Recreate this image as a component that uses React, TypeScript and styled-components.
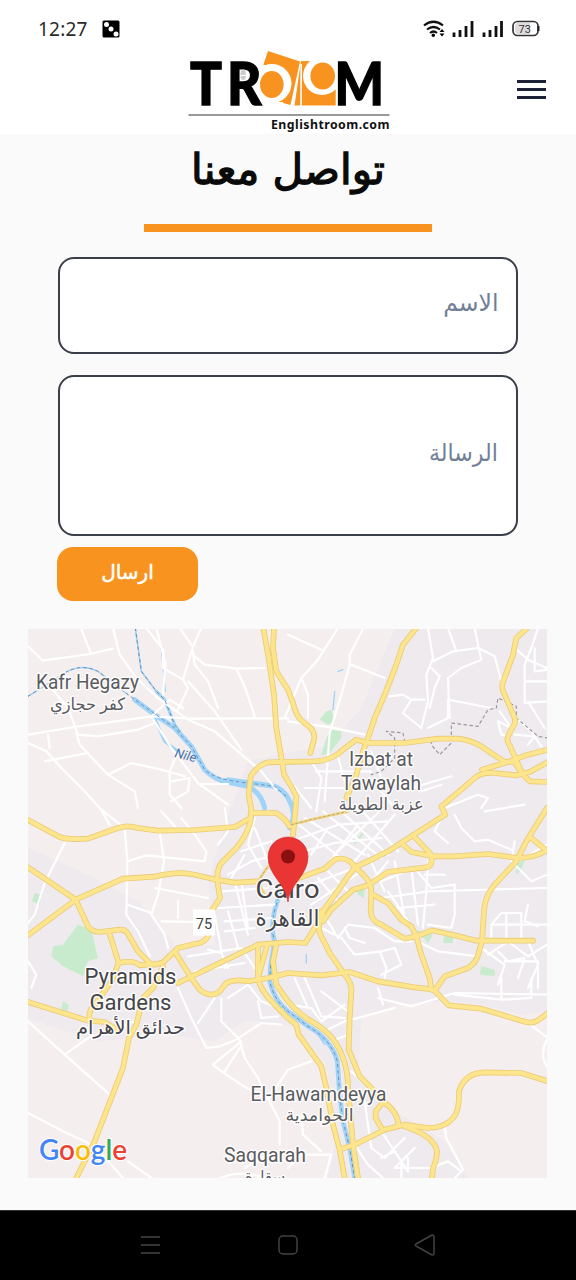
import React from "react";
import styled, { createGlobalStyle } from "styled-components";

const GlobalStyle = createGlobalStyle`
  * { box-sizing: border-box; }
  body { margin: 0; background: #fafafa; font-family: "Noto Sans", "DejaVu Sans", sans-serif; }
`;

const Screen = styled.div`
  display: flex;
  flex-direction: column;
  width: 576px;
  height: 1280px;
  overflow: hidden;
  background: #fafafa;
`;

const Header = styled.header`
  height: 134px;
  background: #fff;
`;

const StatusBar = styled.div`
  display: flex;
  align-items: center;
  height: 52px;
  padding: 6px 36px 0 38px;
`;

const Clock = styled.span`
  width: 64px;
  font: 400 19px/26px "Noto Sans", sans-serif;
  letter-spacing: 0.2px;
  color: #2a2a2a;
`;

const StatusIcons = styled.div`
  display: flex;
  margin-left: auto;
`;

const NavBar = styled.div`
  display: grid;
  grid-template-columns: 1fr 208px 1fr;
  height: 82px;
`;

const LogoBox = styled.a`
  grid-column: 2;
  margin-top: -4px;
  height: 84px;
  svg { display: block; overflow: visible; }
`;

const MenuButton = styled.button`
  justify-self: end;
  align-self: start;
  display: flex;
  flex-direction: column;
  gap: 5px;
  margin: 28px 30px 0 0;
  padding: 0;
  border: 0;
  background: none;
`;

const MenuLine = styled.span`
  width: 29px;
  height: 3px;
  background: #1c2136;
`;

const Main = styled.main`
  display: flex;
  flex-direction: column;
  align-items: center;
  height: 1076px;
`;

const Title = styled.h1`
  margin: 0;
  height: 90px;
  font: 400 42px/72px "DejaVu Sans", sans-serif;
  color: #0a0a0a;
  -webkit-text-stroke: 1.3px #0a0a0a;
  white-space: nowrap;
`;

const TitleRule = styled.div`
  width: 288px;
  height: 8px;
  background: #f7931e;
`;

const Form = styled.form`
  display: flex;
  flex-direction: column;
  width: 460px;
  margin-top: 25px;
`;

const Field = styled.label<{ $height: number; $gap: number }>`
  display: flex;
  align-items: center;
  height: ${(p) => p.$height}px;
  margin-bottom: ${(p) => p.$gap}px;
  padding: 0 18px 8px;
  border: 2px solid #3a3e48;
  border-radius: 16px;
  background: #fff;
  font-size: 24px;
  color: #718096;
`;

const Placeholder = styled.span<{ $condense: number }>`
  transform: scaleX(${(p) => p.$condense});
  transform-origin: right center;
`;

const SendButton = styled.button`
  width: 141px;
  height: 54px;
  margin-left: -1px;
  padding: 0 0 5px;
  border: 0;
  border-radius: 16px;
  background: #f7931e;
  font: 400 20px "DejaVu Sans", sans-serif;
  -webkit-text-stroke: 0.5px #fff;
  color: #fff;
`;

const MapFrame = styled.section`
  align-self: flex-start;
  width: 519px;
  height: 549px;
  margin: 28px 0 0 28px;
  svg { display: block; }
`;

const SystemNav = styled.nav`
  display: flex;
  align-items: center;
  justify-content: space-between;
  height: 70px;
  padding: 0 140px 2px;
  background: #000;
  border-top: 1px solid #333;
`;

const Logo = () => (
  <svg width="208" height="84" viewBox="184 48 208 84">
    <path d="M268 51L300 61.500L290.500 105L253 95Z" fill="#f7931e" />
    <path d="M250 62L265 65L275 102L283 102L282 110H245Z" fill="#fff" />
    <ellipse cx="272" cy="83.500" rx="19.500" ry="19.500" fill="#fff" />
    <ellipse cx="271.800" cy="84.500" rx="11.800" ry="13.500" fill="#f7931e" />
    <path d="M301 61H309L335.700 76V105.500H294.500Z" fill="#f7931e" />
    <path d="M301.200 64L301 106" stroke="#fff" strokeWidth="1.600" />
    <ellipse cx="322" cy="76" rx="19" ry="19" fill="#fff" />
    <ellipse cx="322.700" cy="76" rx="12.300" ry="13.500" fill="#f7931e" />
    <g fill="#000" stroke="#000" strokeWidth="1.300" fontFamily="Lato, sans-serif" fontWeight="900" fontSize="59">
      <text x="190" y="105.200" textLength="32" lengthAdjust="spacingAndGlyphs">T</text>
      <text x="227" y="105.200" textLength="34.500" lengthAdjust="spacingAndGlyphs">R</text>
      <text x="334.500" y="105.200" textLength="49.500" lengthAdjust="spacingAndGlyphs">M</text>
    </g>
    <path d="M240.500 73.500q0-4 2.700-4t2.700 4v1.500h-5.400zM240.500 76h5.400q0 4-2.700 4t-2.700-4z" fill="#ccc" />
    <path d="M188.500 115H389.500" stroke="#777" strokeWidth="1.500" />
    <text x="271" y="129.300" textLength="118.500" fontFamily="Noto Sans, sans-serif" fontWeight="700" fontSize="12.300" fill="#111">Englishtroom.com</text>
  </svg>
);

const DiceIcon = () => (
  <svg width="18" height="18" viewBox="0 0 18 18">
    <rect x=".5" y=".5" width="17" height="17" rx="1.500" />
    <g fill="#fff"><circle cx="4.500" cy="4.500" r="2.500" /><circle cx="9" cy="9" r="2.500" /><circle cx="14" cy="14" r="2.500" /></g>
  </svg>
);

const StatusGlyphs = () => (
  <svg width="118" height="20" viewBox="422 19 118 20">
    <g fill="none" stroke="#111" strokeWidth="2.200">
      <path d="M424 25.500Q433.500 18 443 25.500M427 29.500Q433.500 24.500 440 29.500M430 33Q433.500 30 437 33" />
    </g>
    <circle cx="433.300" cy="35.300" r="1.700" />
    <path d="M439.500 32L442 29L444.500 32ZM439.500 33.500H444.500L442 36.500Z" />
    <path stroke="#111" strokeWidth="2.800" d="M454 32.500V37M460 30V37M466 26V37M472 21V37M484 32.500V37M490 30V37M496 26V37M501.500 21V37" />
    <rect x="513" y="21.500" width="25" height="14" rx="4.500" fill="#fff" stroke="#333" strokeWidth="1.700" />
    <path d="M517 23H530V34H517Q515 33 515 31V26Q515 24 517 23Z" fill="#ddd" />
    <path d="M538.500 26V31" stroke="#222" strokeWidth="2" />
    <text x="518.500" y="32.500" fontFamily="Roboto, sans-serif" fontSize="11" textLength="12.500" fill="#333">73</text>
  </svg>
);

// Map geometry: three units to one pixel.
const highways = [
  "M706 0L722 90L738 200L745 300L762 400L768 440L790 475L805 505L802 550L795 620",
  "M738 0L735 60L745 130L780 185L795 225Q803 260 820 277L848 300Q862 315 858 335L847 375",
  "M1560 462L1505 460L1480 435L1460 402L1430 402L1360 355Q1325 335 1290 332L1230 332L1130 345L1020 345L985 335Q950 360 930 378Q900 398 860 400L720 403Q690 410 668 445L662 500L670 545L668 580Q655 625 625 660L585 700Q565 720 568 760L576 810L550 850M548 900L540 925Q530 945 500 948L450 960L405 1003L380 1010",
  "M1560 402L1505 432L1465 442L1400 435Q1360 432 1340 450L1300 485L1240 535L1252 560L1150 625L1080 670L1030 695L980 718L935 780L885 850",
  "M1560 365L1500 380L1430 405L1362 425",
  "M1495 3L1465 30L1455 80L1424 165Q1420 185 1430 200L1460 270Q1464 285 1455 295L1440 325Q1435 340 1445 352L1480 430",
  "M0 576L95 627Q120 636 180 632L270 600Q300 590 330 600L390 608L500 606L620 597L668 570V555L745 555Q770 570 785 595",
  "M0 718L143 815L180 895Q190 910 215 912L275 905Q292 903 300 918L330 970L370 1010",
  "M0 922L143 815L285 752L380 746Q450 728 500 740L560 754L620 764L690 760",
  "M785 760L800 755L890 722L920 695Q940 686 965 700L1010 745Q1030 765 1030 790L1028 850Q1030 880 1060 890L1130 932L1165 925",
  "M243 912L272 1005Q320 995 335 1012L380 1008",
  "M443 975L490 1050L515 1085Q550 1112 575 1090L595 1065Q620 1052 660 1060L720 1050L780 1035L880 1042L965 1032L1050 1060L1160 1078L1220 1085",
  "M1220 1088L1250 1045L1320 1020Q1345 1005 1352 975L1362 940L1368 850Q1370 805 1400 770L1465 700L1495 640L1557 540",
  "M1210 1083L1222 1090L1262 1132L1360 1142L1480 1178Q1510 1190 1530 1177L1560 1155",
  "M1165 925L1212 907L1280 922L1345 938L1515 938",
  "M1165 925L1180 980L1205 1050L1210 1085",
  "M1120 645L1150 672L1215 685L1280 685L1380 678L1470 690Q1520 690 1560 665M1512 632L1556 668",
  "M1155 622L1210 680Q1215 715 1195 718L1080 732L1020 772L975 785L910 845L885 880",
  "M1035 800L1080 825L1120 875L1150 895L1165 925",
  "M880 850Q870 890 875 915L905 975L950 1040Q972 1065 970 1090L965 1170L962 1265L995 1345L1030 1380L1065 1420Q1108 1450 1112 1490M1067 1420L1043 1450V1470L1065 1508",
  "M935 1565L980 1550L1070 1505L1130 1490L1200 1500Q1250 1500 1275 1470Q1295 1450 1293 1390Q1310 1335 1370 1333L1480 1335L1560 1360",
  "M1130 1495Q1220 1525 1227 1570Q1225 1600 1215 1620L1212 1650",
  "M450 1065L690 950L780 942L832 945L885 860",
  "M745 950L735 1000L745 1070L780 1120Q815 1160 850 1180Q900 1210 920 1240Q960 1300 960 1380L975 1550L990 1650",
  "M718 950L690 1050Q695 1085 740 1130L780 1170L805 1190L812 1220L880 1315L895 1380L915 1490L935 1565L950 1650M690 950V1055",
  "M0 1122L180 1178L230 1182L265 1205",
  "M272 1005L250 1060L200 1130Q180 1145 185 1178",
  "M405 1015L375 1080L345 1110L325 1190L303 1230L285 1320L250 1410L200 1540L145 1650",
];

const diagonals = ["M1165 0L1125 50L1105 110L1070 200L1040 270L1020 330L1005 370L985 440L955 510"];

const streets = [
  "M0 55L45 98L185 78L255 62M160 3L188 75M255 0L275 80L325 150L390 210L480 275L560 310L700 430L745 485",
  "M355 0L405 65V120L465 155L495 55L520 0M385 0L412 105L405 200M495 70L500 110L540 160L570 240M500 85L530 110L625 122L710 120M625 122L650 175L680 265M465 155L480 180L450 245M480 160L560 250L640 365",
  "M0 320L140 297L370 265L490 272L780 271M70 180L120 240L150 320M150 320L210 325L330 305L380 285M0 345L55 370L100 420L170 490L215 540L245 590M50 400L180 375M60 320L65 360M145 315L155 350L240 440L320 490L330 540M240 440L310 405L400 425L470 445M370 265L430 360L510 465L600 530M450 370L425 430V500L460 540M430 460L485 450L480 490L430 520M520 468H600M370 265L425 215L465 240M455 0L490 50",
  "M770 270L820 150L870 95L930 0M780 20L880 65M1005 3L965 80V110L940 200L905 315L890 520M970 110L1070 150M820 150L840 200V270M780 280L910 298L1010 320M1085 205L1125 200L1150 215L1190 215M1150 215L1125 255L1180 300M1200 0L1215 90L1195 140L1200 220L1180 300M1215 100L1275 70L1350 60L1400 85L1420 160M1210 120L1235 145L1220 180L1205 240M1340 0L1350 50M1260 0L1285 70M1265 270L1260 150L1300 120L1360 95L1350 50M1200 300L1260 270V215L1390 240",
  "M1460 60L1500 95L1556 120M1530 0L1510 60L1490 110V225L1560 220M1490 160H1560M1520 60V130L1560 125M1500 220L1550 300M1465 270L1510 310L1540 355M1415 250L1450 300L1410 280L1420 320L1445 325M1460 320L1520 325L1500 350",
  "M850 400L880 450L865 550M890 400L930 385L950 460M865 430H1030M830 480H980M780 450L850 540M1030 370L1060 450L1150 480L1270 445M1160 445L1180 490L1240 470M1050 480L1100 540",
  "M110 645L50 765L20 860L0 885M220 545L290 600L298 700L295 860L330 910L365 985M395 610L408 700L390 800L370 860L410 920L420 960M300 700L355 682L530 700L535 670L500 620L460 570M400 550L445 600M380 780L540 810M300 830L370 855M400 880L520 882M450 820V870",
  "M590 540L600 610L570 650M680 600L720 700M640 670L730 640M600 740L670 700L750 680M620 760L660 920M580 790L720 780M570 840L740 830M590 880L735 870M590 910L680 900M610 750L650 680M680 570L660 650L700 720M600 850L630 960M540 965L580 975L600 1020M560 860L590 1020M480 985L640 960M500 1030L650 1005M640 960L680 1020M640 760L660 900",
  "M800 580L950 700M830 570L1010 680M885 550L1060 690M940 550L1080 680M1000 545L1110 670M790 640L930 590L1080 580M790 680L920 645L1060 630M850 680L900 600M890 720L990 590M930 670L1050 555M970 710L1100 560M820 780L980 720M850 830L1000 730M870 750L930 820M900 730L960 790",
  "M1060 760L1160 720L1210 780L1280 770V860L1270 900L1200 890M1060 810L1200 790L1557 780M1100 700L1130 870M1150 720L1170 890M1200 700L1195 790L1185 900M1020 680L1070 790M1080 700L1040 750M1080 790L1140 880M1110 840L1220 830M1190 740H1250",
  "M880 900L940 930L980 980L1060 970L1100 960L1120 1010L1060 1040M900 880L930 930L960 890L1040 900L1100 940L1150 940M950 900L965 930L1010 945M1055 970L1075 1020L1070 1050M1165 940L1230 970L1350 985M1280 560L1300 600L1340 640L1380 635L1450 665M1240 570L1220 610L1260 645M1370 550L1490 530M1250 540L1350 500L1380 510L1360 540",
  "M1390 940V890L1420 855H1480V940M1395 890H1557M1435 855V930M1500 830L1490 880L1530 895M1380 980L1440 940L1500 985L1557 950M1360 960L1430 1010L1410 1070M1430 1000H1530V1080M1410 970L1440 1000L1490 990L1470 1050M1500 940L1530 1010L1500 1080M1460 640L1450 700L1510 760L1557 740M1470 700L1557 650",
  "M450 1080L490 1170L535 1260L575 1255L625 1235L700 1185L760 1190M580 1110V1180L635 1235L650 1290L690 1350L730 1430L755 1480V1550M600 1110L660 1070L700 1120L765 1145M560 1110L510 1185M690 1120L700 1170L750 1165M640 1240L555 1310L580 1330L640 1370L720 1415L780 1325L850 1300M590 1330L635 1260M0 1180L110 1280L245 1400M110 1280L180 1230L320 1180M0 1455L105 1510L200 1555L285 1650M300 1600L370 1650M0 1000L25 1040L10 1080",
  "M780 1130L850 1140L880 1180L950 1130M800 1050L840 1140M830 1050L880 1165L950 1170M880 1090L960 1150M890 1210L950 1180L1100 1140M1050 1080L1065 1130M910 1240L960 1220M970 1330L1010 1365M1050 1110L1150 1135L1280 1095L1560 1100M1280 1100L1420 1115V1050M1420 1115L1510 1110V1050M1480 1170L1560 1230Q1530 1280 1560 1320",
  "M1010 1420L1020 1490L1030 1560L1070 1590L1130 1530M1060 1510L1120 1600V1650M1060 1590L1100 1570L1140 1630V1590M1250 1500L1255 1530L1305 1625L1280 1650M1160 1560L1100 1620H1210M1210 1620L1260 1600L1300 1630M820 1460L825 1520L880 1570M780 1620L820 1580H910L890 1650M650 1620L700 1590L800 1600M980 1550L1020 1610L1065 1650M560 1660Q620 1620 720 1650",
];

const river = "M322 0L340 130L385 190L410 215L440 290L455 310";
const nile = "M320 215L380 260L440 300L490 355L530 425Q560 455 600 463L660 475Q700 495 710 540M600 455L740 475Q765 485 780 510Q810 560 785 600";
const nileSouth = "M760 790Q720 880 740 940L728 1010L725 1060Q740 1120 780 1150L840 1195Q910 1235 928 1300L935 1400L945 1480L965 1560L980 1650";

type LabelProps = { x: number; y: number; size?: number; width?: number; children: string; dark?: boolean };
const MapLabel = ({ x, y, size = 19.5, width, dark, children }: LabelProps) => (
  <text
    x={x} y={y} fontSize={size} textAnchor="middle" textLength={width} lengthAdjust="spacingAndGlyphs"
    fontFamily="Roboto, Noto Sans, DejaVu Sans, sans-serif" fill={dark ? "#454549" : "#5a5b5f"}
    stroke="#fff" strokeWidth="3" strokeOpacity=".85" strokeLinejoin="round" paintOrder="stroke"
  >{children}</text>
);

const googleLetters: [string, string][] = [["G", "#4285f4"], ["o", "#ea4335"], ["o", "#fbbc05"], ["g", "#4285f4"], ["l", "#34a853"], ["e", "#ea4335"]];

const CairoMap = () => (
  <svg width="519" height="549" viewBox="28 629 519 549">
    <rect x="28" y="628" width="519" height="550" fill="#f5eeef" />
    <g transform="translate(28 628) scale(.333333)" fill="none" strokeLinecap="round" strokeLinejoin="round">
      <path fill="#eeeaee" d="M1100 0H1560V1150L1480 1160L1360 1130L1250 1120L1100 1130L1000 1170L990 1350L1070 1430L1250 1540L1320 1650H900L930 1500L890 1300L780 1190L650 1180L560 1240L420 1220L200 1240L0 1170V660L160 730L330 820L450 960L560 950L540 760L590 590L660 400L900 350L1000 240Z" />
      <path fill="#c9ebcd" d="M895 250L910 245L920 280L900 290L875 275ZM910 305L940 310V330L905 375L880 382L895 330ZM150 890L190 905L210 990L180 1000L165 1045L105 1015L70 985L75 955L105 950ZM20 795L40 800L35 832L12 820ZM105 1120L122 1130L118 1150L100 1145ZM985 780L1010 782L1008 810L990 800ZM1165 905L1215 920L1200 945ZM1250 915L1275 930V945H1245ZM1465 700L1490 695L1480 725L1465 740ZM1360 1015L1400 1025V1045L1355 1040Z" />
      <path stroke="#c9ebcd" strokeWidth="6" d="M980 645L1010 610M900 845L915 830" />
      <g stroke="#9fd3f7">
        <path strokeWidth="5" d={river} />
        <path strokeWidth="15" d={nile} />
        <path strokeWidth="9" d="M385 190L410 215L440 290L455 310M380 270L410 340L450 370" />
        <path strokeWidth="14" d={nileSouth} />
        <path strokeWidth="4" d="M0 205L40 180L110 135Q160 105 210 130L300 200M920 190L915 245M930 130L945 125M870 1220L890 1250M835 980V1005M400 60L412 190" />
      </g>
      <g stroke="#fff" strokeWidth="6.500">{streets.map((d) => <path key={d} d={d} />)}</g>
      <path stroke="#718fae" strokeWidth="3" strokeDasharray="8 11" d={`${river} M0 205L40 180L110 135Q160 105 210 130L300 200L440 300L490 355L530 425Q560 455 660 465L740 475L780 510 ${nileSouth}`} />
      <path stroke="#99969d" strokeWidth="3.500" strokeDasharray="8 10" d="M1560 330L1530 325L1465 270V235L1410 210L1405 240L1380 245L1350 295L1270 285V345L1235 380L1210 350V335L1130 340L1125 315L1075 310L1100 330V390L1060 430L1030 440" />
      <g stroke="#ebcb74" strokeWidth="17">
        {highways.map((d) => <path key={d} d={d} />)}
        {diagonals.map((d) => <path key={d} d={d} />)}
      </g>
      <g stroke="#fde58e" strokeWidth="12">
        {highways.map((d) => <path key={d} d={d} />)}
        {diagonals.map((d) => <path key={d} d={d} />)}
      </g>
      <path stroke="#f3d77d" strokeWidth="8" d="M790 590L850 575L960 550M690 760L720 715M710 800L690 760" />
      <path stroke="#b8a77d" strokeWidth="3" strokeDasharray="7 7" d="M790 590L850 575L960 550M690 760L720 715" />
    </g>
    <MapLabel x={87.5} y={689} width={103} size={20.5}>Kafr Hegazy</MapLabel>
    <MapLabel x={87.5} y={709.5} width={75} size={17}>كفر حجازي</MapLabel>
    <MapLabel x={381} y={766} width={64}>Izbat at</MapLabel>
    <MapLabel x={381} y={789.5} width={80}>Tawaylah</MapLabel>
    <MapLabel x={381} y={809.5} width={85} size={17}>عزبة الطويلة</MapLabel>
    <MapLabel x={287.5} y={897.5} width={64} size={26} dark>Cairo</MapLabel>
    <MapLabel x={287.5} y={925.5} width={64} size={23} dark>القاهرة</MapLabel>
    <MapLabel x={130.5} y={984} width={92} size={22} dark>Pyramids</MapLabel>
    <MapLabel x={130.5} y={1010} width={82} size={22} dark>Gardens</MapLabel>
    <MapLabel x={130.5} y={1034} width={109} size={19} dark>حدائق الأهرام</MapLabel>
    <MapLabel x={318.5} y={1100.5} width={136}>El-Hawamdeyya</MapLabel>
    <MapLabel x={319.5} y={1120.5} width={68} size={17}>الحوامدية</MapLabel>
    <MapLabel x={265} y={1161.5} width={82}>Saqqarah</MapLabel>
    <MapLabel x={265} y={1181.5} width={40} size={16}>سقارة</MapLabel>
    <text transform="translate(174 757) rotate(14)" fontFamily="Roboto, sans-serif" fontSize="13" fontStyle="italic" fill="#4774ad">Nile</text>
    <rect x="193" y="909.500" width="22" height="26" fill="#fff" />
    <text x="204" y="928.500" textAnchor="middle" fontFamily="Roboto, sans-serif" fontSize="14.500" fill="#444">75</text>
    <path d="M288 902C286 884 268 875 268 857A20 20 0 1 1 308 857C308 875 290 884 288 902Z" fill="#ea3535" stroke="#d02a2a" strokeWidth=".6" />
    <circle cx="288" cy="856.500" r="7" fill="#8b1010" />
    <text x="39" y="1159.500" textLength="88" lengthAdjust="spacingAndGlyphs" fontFamily="Lato, sans-serif" fontSize="28" fontWeight="600" stroke="#fff" strokeWidth="2" paintOrder="stroke">
      {googleLetters.map(([c, color], i) => <tspan key={i} fill={color}>{c}</tspan>)}
    </text>
  </svg>
);

const RecentsIcon = () => (
  <svg width="22" height="24" viewBox="0 0 22 24"><path d="M1 4H20M1 12H20M1 20H20" stroke="#333" strokeWidth="2" /></svg>
);
const HomeIcon = () => (
  <svg width="22" height="22" viewBox="0 0 22 22"><rect x="2" y="2" width="18" height="18" rx="4" fill="none" stroke="#424242" strokeWidth="1.500" /></svg>
);
const BackIcon = () => (
  <svg width="22" height="24" viewBox="0 0 22 24"><path d="M18 2L2 11Q.5 12 2 13L18 22Q20 22 20 20V4Q20 2 18 2Z" fill="none" stroke="#424242" strokeWidth="1.500" /></svg>
);

export default function App() {
  return (
    <Screen>
      <GlobalStyle />
      <Header>
        <StatusBar>
          <Clock>12:27</Clock>
          <DiceIcon />
          <StatusIcons><StatusGlyphs /></StatusIcons>
        </StatusBar>
        <NavBar>
          <LogoBox><Logo /></LogoBox>
          <MenuButton aria-label="القائمة"><MenuLine /><MenuLine /><MenuLine /></MenuButton>
        </NavBar>
      </Header>
      <Main>
        <Title dir="rtl">تواصل معنا</Title>
        <TitleRule />
        <Form>
          <Field dir="rtl" $height={97} $gap={21}><Placeholder $condense={0.98}>الاسم</Placeholder></Field>
          <Field dir="rtl" $height={161} $gap={11}><Placeholder $condense={0.92}>الرسالة</Placeholder></Field>
          <SendButton type="button">ارسال</SendButton>
        </Form>
        <MapFrame><CairoMap /></MapFrame>
      </Main>
      <SystemNav><RecentsIcon /><HomeIcon /><BackIcon /></SystemNav>
    </Screen>
  );
}
